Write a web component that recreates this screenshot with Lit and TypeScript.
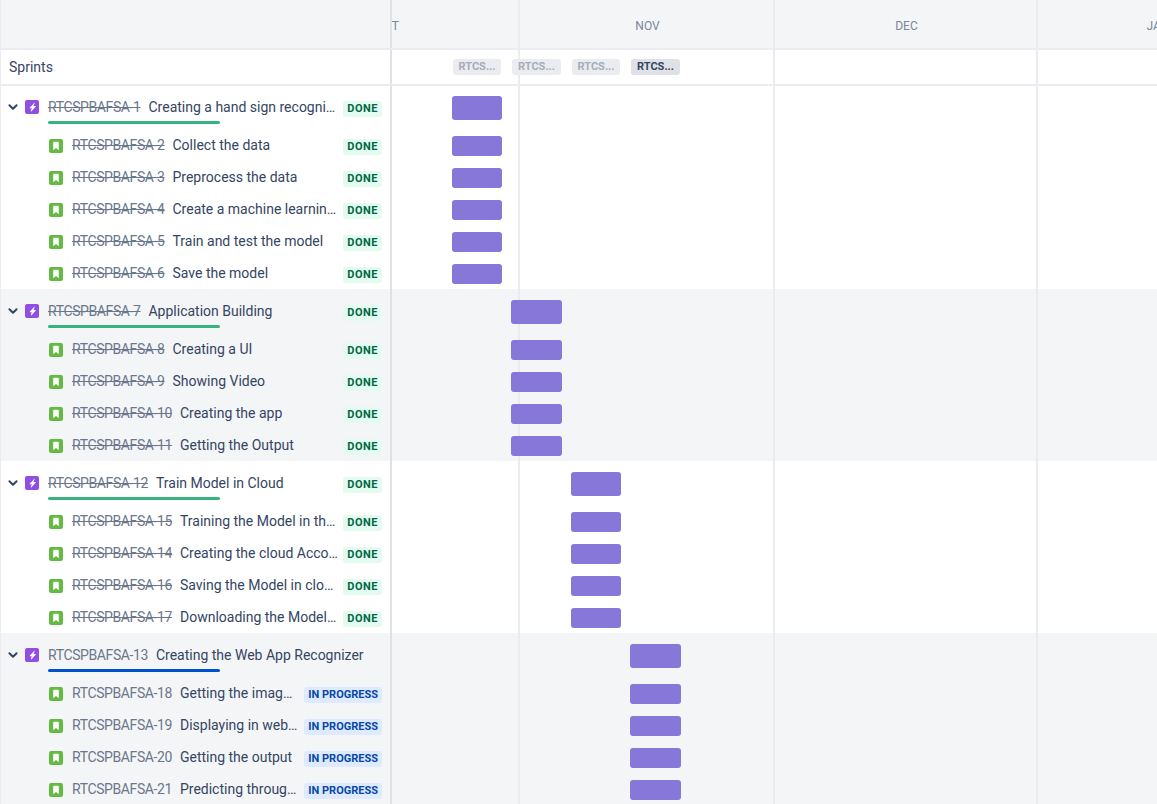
import { LitElement, html, css, svg } from "lit";
import { customElement } from "lit/decorators.js";
import { classMap } from "lit/directives/class-map.js";

interface Child { key: string; title: string; }
interface Epic { key: string; title: string; x: number; w: number; progress: boolean; children: Child[]; }

const epics: Epic[] = [
  { key: "RTCSPBAFSA-1", title: "Creating a hand sign recognition model", x: 59.7, w: 50.6, progress: false, children: [
    { key: "RTCSPBAFSA-2", title: "Collect the data" },
    { key: "RTCSPBAFSA-3", title: "Preprocess the data" },
    { key: "RTCSPBAFSA-4", title: "Create a machine learning model" },
    { key: "RTCSPBAFSA-5", title: "Train and test the model" },
    { key: "RTCSPBAFSA-6", title: "Save the model" },
  ]},
  { key: "RTCSPBAFSA-7", title: "Application Building", x: 119.2, w: 50.8, progress: false, children: [
    { key: "RTCSPBAFSA-8", title: "Creating a UI" },
    { key: "RTCSPBAFSA-9", title: "Showing Video" },
    { key: "RTCSPBAFSA-10", title: "Creating the app" },
    { key: "RTCSPBAFSA-11", title: "Getting the Output" },
  ]},
  { key: "RTCSPBAFSA-12", title: "Train Model in Cloud", x: 178.8, w: 50.6, progress: false, children: [
    { key: "RTCSPBAFSA-15", title: "Training the Model in the cloud" },
    { key: "RTCSPBAFSA-14", title: "Creating the cloud Account" },
    { key: "RTCSPBAFSA-16", title: "Saving the Model in cloud storage" },
    { key: "RTCSPBAFSA-17", title: "Downloading the Model from cloud" },
  ]},
  { key: "RTCSPBAFSA-13", title: "Creating the Web App Recognizer", x: 238.2, w: 50.8, progress: true, children: [
    { key: "RTCSPBAFSA-18", title: "Getting the image from camera" },
    { key: "RTCSPBAFSA-19", title: "Displaying in web application" },
    { key: "RTCSPBAFSA-20", title: "Getting the output" },
    { key: "RTCSPBAFSA-21", title: "Predicting through the model" },
  ]},
];

const sprints = [
  { x: 61, w: 48, active: false },
  { x: 120, w: 49, active: false },
  { x: 180, w: 48, active: false },
  { x: 239, w: 49, active: true },
];

const months = [
  { label: "OCT", w: 128, labelW: 265, shift: -137 },
  { label: "NOV", w: 255, labelW: 255, shift: 0 },
  { label: "DEC", w: 263, labelW: 263, shift: 0 },
  { label: "JAN", w: 240, labelW: 240, shift: 0 },
];

const epicIcon = svg`<svg class="icon" viewBox="0 0 14 14" width="14" height="14"><rect width="14" height="14" rx="2" fill="#904EE2"/><path d="M9.3 2.8 4.7 7.8c-.2.2 0 .5.2.5h1.9l-1 2.8c-.1.3.3.5.5.3l4.5-5c.2-.2 0-.5-.2-.5H8.5l1.2-2.8c.1-.3-.2-.5-.4-.3z" fill="#fff"/></svg>`;
const storyIcon = svg`<svg class="icon" viewBox="0 0 14 14" width="14" height="14"><rect width="14" height="14" rx="2" fill="#65BA43"/><path d="M4.2 3.4c0-.3.3-.6.6-.6h4.4c.3 0 .6.3.6.6v7.3c0 .2-.2.3-.4.2L7 9.1l-2.4 1.8c-.2.1-.4 0-.4-.2z" fill="#fff"/></svg>`;
const chevron = svg`<svg class="chev" viewBox="0 0 12 12" width="12" height="12"><path d="M2.4 4.2 6 7.8l3.6-3.6" fill="none" stroke="#344563" stroke-width="2" stroke-linecap="round" stroke-linejoin="round"/></svg>`;

@customElement("app-root")
export class AppRoot extends LitElement {
  static styles = css`
    :host { display: block; width: 1157px; height: 804px; overflow: hidden; position: relative; background: #fff;
      font-family: "Roboto", "Liberation Sans", sans-serif; font-size: 14px; color: #253858; }
    .grid-lines { position: absolute; left: 392px; top: 0; bottom: 0; display: flex; z-index: 1; pointer-events: none; }
    .grid-col { flex: none; box-sizing: border-box; border-right: 2px solid #EBECF0; }
    .head { display: flex; height: 50px; box-sizing: border-box; background: #F4F5F7; border-bottom: 2px solid #EBECF0; }
    .corner { flex: none; width: 390px; border-left: 1px solid #EBECF0; box-sizing: border-box; }
    .divider { flex: none; width: 2px; background: #DFE1E6; align-self: stretch; position: relative; z-index: 3; }
    .cal { flex: 1; display: flex; overflow: hidden; position: relative; }
    .month { flex: none; display: flex; align-items: center; justify-content: center; font-size: 12px; color: #7A869A; height: 100%; padding-top: 4px; box-sizing: border-box; }
    .row { display: flex; box-sizing: border-box; }
    .left { flex: none; width: 390px; box-sizing: border-box; border-left: 1px solid #EBECF0; display: flex; align-items: center; min-width: 0; }
    .right { flex: 1; position: relative; min-width: 0; }
    .sprints { height: 36px; border-bottom: 2px solid #EBECF0; }
    .sprints .left { padding-left: 8px; color: #344563; }
    .chips { display: flex; align-items: center; height: 100%; box-sizing: border-box; }
    .chip { flex: none; box-sizing: border-box; height: 16px; border-radius: 3px; background: #EBECF0; color: #A5ADBA; font-size: 11px; font-weight: 700; line-height: 16px; text-align: center; overflow: hidden; white-space: nowrap; position: relative; z-index: 2; }
    .chip.active { background: #DFE1E6; color: #344563; }
    .section.first { margin-top: -1px; }
    .section.alt { background: #F4F5F7; }
    .epic { height: 44px; }
    .epic .left { padding-left: 6px; padding-right: 8px; align-items: flex-start; padding-top: 14px; position: relative; }
    .child { height: 32px; }
    .child .left { padding-left: 48px; padding-right: 8px; }
    .chev { flex: none; margin: 2px 6px 0 0; }
    .icon { flex: none; display: block; margin-right: 9px; }
    .epic .icon { margin-top: 1px; }
    .child .icon { margin-top: 1px; }
    .text { display: flex; flex: 1; min-width: 0; }
    .key { flex: none; color: #6B778C; margin-right: 8px; line-height: 16px; letter-spacing: -0.4px; }
    .key.done { text-decoration: line-through; }
    .title { flex: 1; min-width: 0; white-space: nowrap; overflow: hidden; text-overflow: ellipsis; line-height: 16px; color: #344563; margin-right: 4px; }
    .title.tight { margin-right: 6px; }
    .lozenge { flex: none; height: 16px; line-height: 16px; padding: 0 4px; border-radius: 3px; font-size: 11px; font-weight: 700; white-space: nowrap; margin-top: 4px; }
    .epic .lozenge { margin-top: 2px; }
    .lozenge.done { background: #E3FCEF; color: #006644; letter-spacing: 0.5px; }
    .lozenge.prog { background: #DEEBFF; color: #0747A6; }
    .under { position: absolute; left: 47px; top: 36px; width: 172px; height: 3px; border-radius: 2px; background: #36B37E; }
    .under.prog { background: #0052CC; }
    .bar { position: absolute; background: #8777D9; border-radius: 3px; z-index: 2; }
    .epic .bar { top: 11px; height: 23.5px; }
    .child .bar { top: 7px; height: 19.5px; }
  `;

  private row(cls: string, icon: unknown, e: Epic, c: { key: string; title: string }, isEpic: boolean) {
    const done = !e.progress;
    const showLozenge = !(isEpic && e.progress);
    return html`<div class="row ${cls}">
      <div class="left">
        ${isEpic ? chevron : ""}${icon}
        <div class="text">
          <span class=${classMap({ key: true, done })}>${c.key}</span>
          <span class=${classMap({ title: true, tight: !done })}>${c.title}</span>
        </div>
        ${showLozenge ? html`<span class="lozenge ${done ? "done" : "prog"}">${done ? "DONE" : "IN PROGRESS"}</span>` : ""}
        ${isEpic ? html`<div class="under ${e.progress ? "prog" : ""}"></div>` : ""}
      </div>
      <div class="divider"></div>
      <div class="right"><div class="bar" style="left:${e.x}px;width:${e.w}px"></div></div>
    </div>`;
  }

  render() {
    return html`
      <div class="grid-lines">
        ${months.map((m) => html`<div class="grid-col" style="width:${m.w}px"></div>`)}
      </div>
      <div class="head">
        <div class="corner"></div>
        <div class="divider"></div>
        <div class="cal">
          ${months.map((m) => html`<div class="month" style="width:${m.labelW}px;margin-left:${m.shift}px">${m.label}</div>`)}
        </div>
      </div>
      <div class="row sprints">
        <div class="left">Sprints</div>
        <div class="divider"></div>
        <div class="right chips">
          ${sprints.map((s, i) => html`<div class=${classMap({ chip: true, active: s.active })} style="width:${s.w}px;margin-left:${i === 0 ? s.x : s.x - sprints[i - 1].x - sprints[i - 1].w}px">RTCS...</div>`)}
        </div>
      </div>
      ${epics.map((e, i) => html`<div class=${classMap({ section: true, first: i === 0, alt: i % 2 === 1 })}>
        ${this.row("epic", epicIcon, e, e, true)}
        ${e.children.map((c) => this.row("child", storyIcon, e, c, false))}
      </div>`)}
    `;
  }
}
